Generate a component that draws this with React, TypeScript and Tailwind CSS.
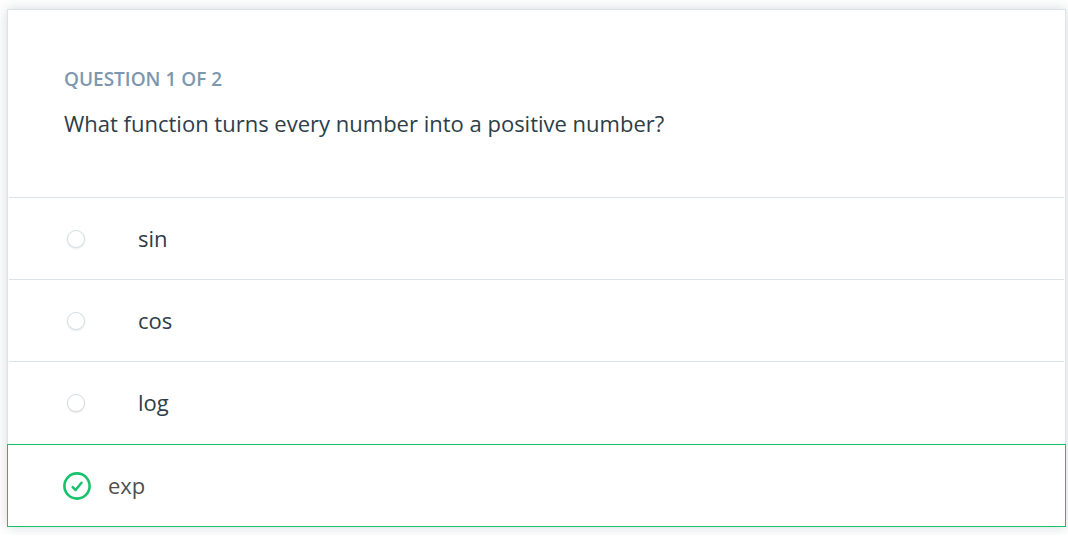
import { useState } from "react";

const options = ["sin", "cos", "log", "exp"];
const answer = "exp";

function CheckedIcon() {
  return (
    <svg
      viewBox="0 0 28 28"
      className="h-7 w-7 shrink-0"
      fill="none"
      stroke="#17c26b"
      aria-hidden="true"
    >
      <circle cx="14" cy="14" r="12.6" strokeWidth="2.6" />
      <path d="M9.7 15.1l2.9 2.9L18.5 10.7" strokeWidth="2.5" strokeLinecap="round" strokeLinejoin="round" />
    </svg>
  );
}

function Option({
  label,
  checked,
  onSelect,
}: {
  label: string;
  checked: boolean;
  onSelect: () => void;
}) {
  return (
    <label
      className={
        checked
          ? "-mx-0.5 mt-px -mb-px flex cursor-pointer items-center gap-[17px] border border-[#17c26b] px-[55px] py-6 text-[#4f4f4f]"
          : "flex cursor-pointer items-center border-t border-[#dbe2e8] px-[55px] py-6 text-[#2e3d49]"
      }
    >
      <input
        type="radio"
        name="answer"
        value={label}
        checked={checked}
        onChange={onSelect}
        className={
          checked
            ? "sr-only"
            : "ml-[3px] mr-[53px] h-[18px] w-[18px] shrink-0 appearance-none rounded-full border border-[#d5dde5] bg-white shadow-[0_1px_2px_rgba(46,61,73,0.12)]"
        }
      />
      {checked && <CheckedIcon />}
      <span className="text-[22px] leading-[33px]">{label}</span>
    </label>
  );
}

export default function App() {
  const [selected, setSelected] = useState(answer);
  return (
    <main className="pt-[9px] pr-0.5 pb-2 pl-[7px] font-['Open_Sans',sans-serif] font-normal">
      <form className="border border-[#dbe2e8] bg-white shadow-[0_0_12px_rgba(46,61,73,0.2)]">
        <fieldset className="px-px">
          <legend className="w-full px-[55px] pt-[55px] pb-14">
            <span className="block text-[19px] leading-7 font-semibold text-[#7d97ad] uppercase">
              Question 1 of 2
            </span>
            <span className="mt-3 block text-[22px] leading-9 text-[#2e3d49]">
              What function turns every number into a positive number?
            </span>
          </legend>
          {options.map((label) => (
            <Option
              key={label}
              label={label}
              checked={selected === label}
              onSelect={() => setSelected(label)}
            />
          ))}
        </fieldset>
      </form>
    </main>
  );
}
